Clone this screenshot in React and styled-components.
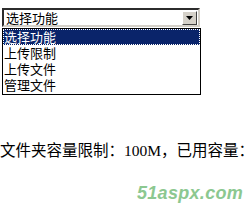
import React from "react"
import styled, { createGlobalStyle } from "styled-components"

const GlobalStyle = createGlobalStyle`
  body {
    margin: 0;
    background: #fff;
  }
`

const options = ["选择功能", "上传限制", "上传文件", "管理文件"]

const App = () => {
  return (
    <Page>
      <GlobalStyle />
      <Picker>
        <SelectBox>
          <span className="value">选择功能</span>
          <Arrow>
            <svg width="7" height="4" viewBox="0 0 7 4">
              <path d="M0 0h7L3.5 4z" fill="#000" />
            </svg>
          </Arrow>
        </SelectBox>
        <List>
          {options.map((o, i) => (
            <Option key={o} active={i === 0}>
              {o}
            </Option>
          ))}
        </List>
      </Picker>
      <Quota>文件夹容量限制：100M，已用容量：</Quota>
      <Logo>51aspx.com</Logo>
    </Page>
  )
}

const Page = styled.div`
  width: 247px;
  height: 222px;
  overflow: hidden;
  padding-top: 8px;
  box-sizing: border-box;
  font-family: "Noto Sans CJK SC", sans-serif;
`

const Picker = styled.div`
  margin-left: 2px;
  width: 199px;
`

const SelectBox = styled.div`
  height: 19px;
  width: 198px;
  box-sizing: border-box;
  border: 2px inset #d4d0c8;
  border-top-color: #808080;
  border-left-color: #808080;
  display: flex;
  align-items: center;
  justify-content: space-between;
  padding: 0 1px 0 2px;
  font-size: 13px;
  line-height: 15px;
  color: #000;
  .value {
    margin-top: -1px;
  }
`

const Arrow = styled.div`
  width: 15px;
  height: 14px;
  box-sizing: border-box;
  background: #d4d0c8;
  border: 1px solid;
  border-color: #fff #404040 #404040 #fff;
  display: flex;
  align-items: center;
  justify-content: center;
`

const List = styled.div`
  margin-top: 1px;
  width: 199px;
  height: 67px;
  box-sizing: border-box;
  border: 1px solid #000;
  display: flex;
  flex-direction: column;
`

const Option = styled.div`
  height: 16px;
  line-height: 16px;
  font-size: 13px;
  padding-left: 1px;
  box-sizing: border-box;
  color: ${(p) => (p.active ? "#fff" : "#000")};
  background: ${(p) => (p.active ? "#0a246a" : "transparent")};
  outline: ${(p) => (p.active ? "1px dotted #fff" : "none")};
  outline-offset: -1px;
`

const Quota = styled.div`
  margin-top: 47px;
  font-family: "Liberation Serif", "Noto Sans CJK SC", serif;
  font-size: 15.5px;
  line-height: 18px;
  white-space: nowrap;
  color: #000;
`

const Logo = styled.div`
  margin-top: 23px;
  margin-left: 137px;
  font-family: "Liberation Sans", sans-serif;
  font-weight: bold;
  font-style: italic;
  font-size: 18px;
  letter-spacing: 0.3px;
  color: #8cc890;
`

export default App
